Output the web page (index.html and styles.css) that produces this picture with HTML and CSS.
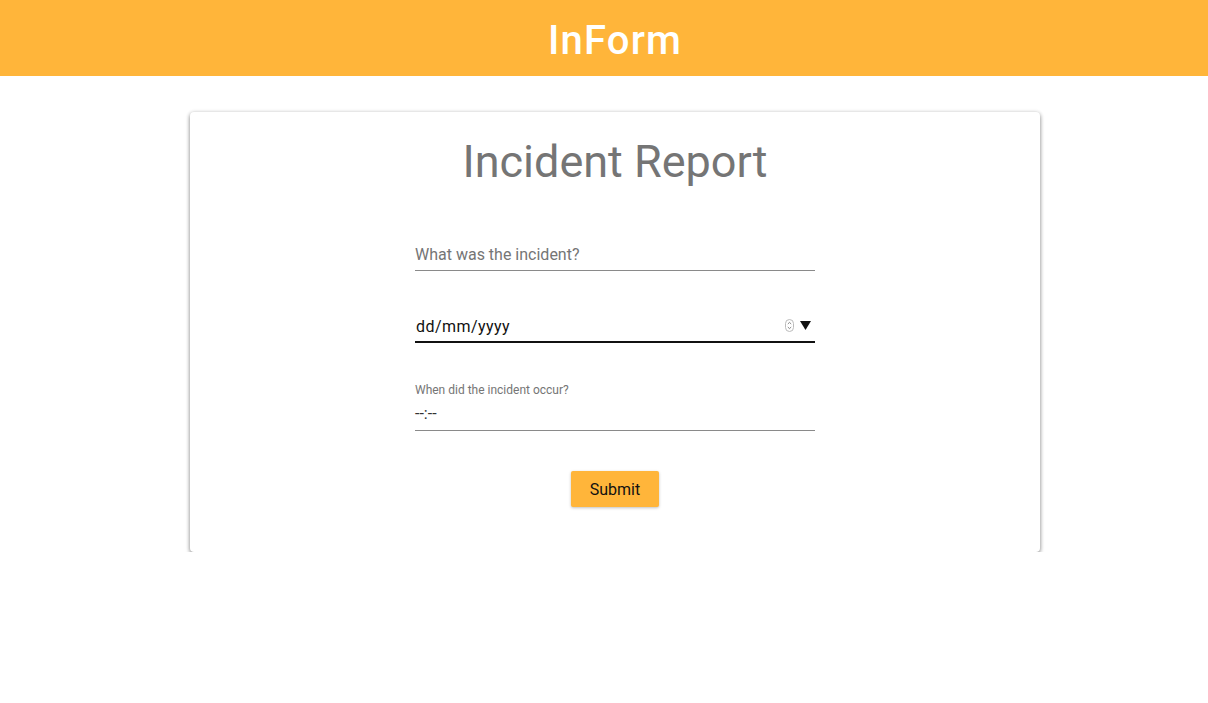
FILE: index.html
```html
<!DOCTYPE html>
<html>
<head>
<meta charset="utf-8">
<link rel="stylesheet" href="styles.css">
</head>
<body>
<header class="topbar"><h1 class="brand">InForm</h1></header>
<main class="page">
  <section class="card">
    <h2 class="card-title">Incident Report</h2>
    <form class="form">
      <div class="field field-text">
        <input class="text-input" type="text" placeholder="What was the incident?">
      </div>
      <div class="field field-date">
        <span class="date-value">dd/mm/yyyy</span>
        <span class="date-controls">
          <svg class="spin" width="9" height="13" viewBox="0 0 9 13"><rect x="0.5" y="0.5" width="8" height="12" rx="4" fill="#fff" stroke="#bbb"/><path d="M2.8 5 L4.5 3.4 L6.2 5" fill="none" stroke="#777" stroke-width="0.9"/><path d="M2.8 8 L4.5 9.6 L6.2 8" fill="none" stroke="#777" stroke-width="0.9"/></svg>
          <svg class="drop" width="11" height="9" viewBox="0 0 11 9"><path d="M0 0 H11 L5.5 9 Z" fill="#111"/></svg>
        </span>
      </div>
      <div class="field field-time">
        <label class="small-label">When did the incident occur?</label>
        <span class="time-value">--:--</span>
      </div>
      <div class="actions">
        <button type="button" class="submit">Submit</button>
      </div>
    </form>
  </section>
</main>
</body>
</html>
```
FILE: styles.css
```css
* { box-sizing: border-box; }
html, body { margin: 0; padding: 0; background: #fff; }
body { font-family: Roboto, "Liberation Sans", sans-serif; color: #212121; }

.topbar {
  height: 76px;
  background: #ffb53a;
  display: flex;
  align-items: center;
  justify-content: center;
  padding-left: 22px;
}
.brand {
  margin: 0;
  font-family: Roboto, "Liberation Sans", sans-serif;
  font-weight: 500;
  font-size: 40px;
  color: #fff;
  letter-spacing: 1.2px;
  line-height: 1;
  padding-top: 6px;
}

.page {
  display: flex;
  justify-content: center;
  padding-top: 36px;
  padding-left: 22px;
}
.card {
  width: 850px;
  height: 440px;
  background: #fff;
  border-radius: 4px;
  box-shadow: 0 2px 4px rgba(0,0,0,0.45), 0 0 4px rgba(0,0,0,0.1);
  display: flex;
  flex-direction: column;
  align-items: center;
}
.card-title {
  margin: 23px 0 0;
  font-weight: 400;
  font-size: 45px;
  line-height: 54px;
  color: #757575;
}

.form {
  width: 400px;
  display: flex;
  flex-direction: column;
  margin-top: 50px;
}
.field { position: relative; }
.field-text { border-bottom: 1px solid #8a8a8a; height: 32px; }
.text-input {
  width: 100%;
  border: 0;
  outline: none;
  background: transparent;
  font-family: Roboto, "Liberation Sans", sans-serif;
  font-size: 16px;
  padding: 0;
  height: 31px;
  line-height: 31px;
  color: #212121;
}
.text-input::placeholder { color: #757575; }

.field-date {
  margin-top: 38px;
  height: 34px;
  border-bottom: 2px solid #111;
  display: flex;
  align-items: center;
  justify-content: space-between;
  padding-left: 1px;
  padding-right: 4px;
}
.date-value { font-size: 16px; color: #111; letter-spacing: 0.45px; padding-top: 2px; }
.date-controls { display: flex; align-items: center; gap: 6px; padding-top: 1px; }
.spin { display: block; }
.drop { display: block; }

.field-time {
  margin-top: 39px;
  border-bottom: 1px solid #8a8a8a;
  display: flex;
  flex-direction: column;
  height: 49px;
}
.small-label { font-size: 12px; color: #757575; line-height: 16px; }
.time-value { font-size: 16px; color: #333; margin-top: 6px; line-height: 20px; }

.actions { display: flex; justify-content: center; margin-top: 40px; }
.submit {
  width: 88px;
  height: 36px;
  border: 0;
  border-radius: 2px;
  background: #ffb53a;
  color: #111;
  font-family: Roboto, "Liberation Sans", sans-serif;
  font-size: 16px;
  box-shadow: 0 1px 3px rgba(0,0,0,0.25);
  padding: 0;
}
```
